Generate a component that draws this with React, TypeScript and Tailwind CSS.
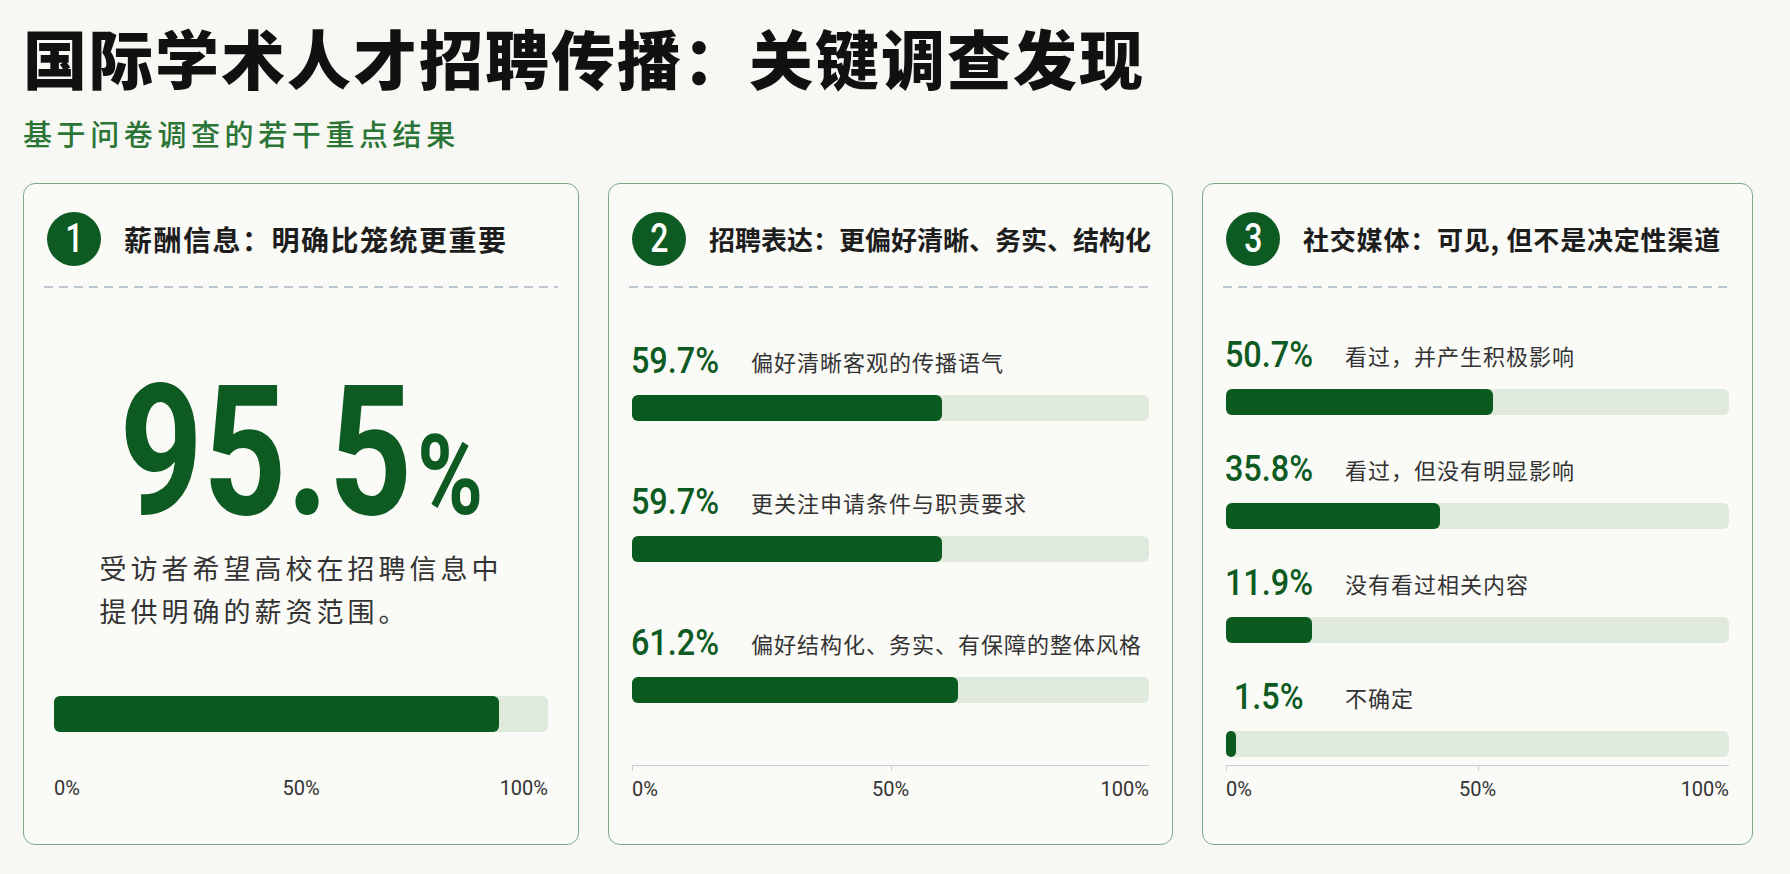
import React from 'react';

const GREEN = 'bg-[#0b5a20]';
const cjk = 'font-[family-name:"Noto_Sans_CJK_SC",sans-serif]';
const num = 'font-[family-name:Roboto,"Liberation_Sans",sans-serif]';

type Row = { pct: string; label: string; fill: number };

const section2: Row[] = [
  { pct: '59.7%', label: '偏好清晰客观的传播语气', fill: 60 },
  { pct: '59.7%', label: '更关注申请条件与职责要求', fill: 60 },
  { pct: '61.2%', label: '偏好结构化、务实、有保障的整体风格', fill: 63 },
];

const section3: Row[] = [
  { pct: '50.7%', label: '看过，并产生积极影响', fill: 53 },
  { pct: '35.8%', label: '看过，但没有明显影响', fill: 42.5 },
  { pct: '11.9%', label: '没有看过相关内容', fill: 17 },
  { pct: '1.5%', label: '不确定', fill: 2 },
];

const CardHeader = ({ n, title, size }: { n: number; title: string; size: string }) => (
  <>
    <div className="flex items-center gap-[23px] pl-[3px] pt-[28px]">
      <div className="flex h-[54px] w-[54px] shrink-0 items-center justify-center rounded-full bg-[#0d5a22]">
        <span className={`${num} inline-block scale-x-[0.8] text-[40px] font-medium leading-none text-white`}>{n}</span>
      </div>
      <h2 className={`${cjk} ${size} whitespace-nowrap font-bold leading-none text-[#1d1d1d]`}>{title}</h2>
    </div>
    <div className="mt-[20px] h-[2px] bg-[repeating-linear-gradient(90deg,#bcc6d1_0_9px,transparent_9px_15px)]" />
  </>
);

const Bar = ({ fill, h }: { fill: number; h: string }) => (
  <div className={`${h} w-full rounded-[6px] bg-[#dfe9dc]`}>
    <div className={`h-full rounded-[6px] ${GREEN}`} style={{ width: `${fill}%` }} />
  </div>
);

const StatRow = ({ row, gap }: { row: Row; gap: string }) => (
  <div className={gap}>
    <div className="flex h-[40px] items-center">
      <div className="flex w-[86px] shrink-0 justify-center">
        <span className={`${num} inline-block scale-x-[0.9] whitespace-nowrap text-[36px] font-medium leading-none text-[#0d5a22]`}>
          {row.pct}
        </span>
      </div>
      <span className={`${cjk} ml-[33px] whitespace-nowrap text-[22px] leading-none tracking-[1px] text-[#333]`}>
        {row.label}
      </span>
    </div>
    <div className="mt-[14px]">
      <Bar fill={row.fill} h="h-[26px]" />
    </div>
  </div>
);

const AxisLabels = ({ mt }: { mt: string }) => (
  <div className={`${num} ${mt} grid grid-cols-3 text-[20px] leading-[24px] text-[#333]`}>
    <span className="text-left">0%</span>
    <span className="text-center">50%</span>
    <span className="text-right">100%</span>
  </div>
);

const Axis = () => (
  <div className="mt-auto mb-[43px] px-[3px]">
    <div className="relative h-px bg-[#c7ccd8]">
      <div className="absolute left-0 top-0 h-[6px] w-px bg-[#c7ccd8]" />
      <div className="absolute left-1/2 top-0 h-[6px] w-px bg-[#c7ccd8]" />
    </div>
    <AxisLabels mt="mt-[11px]" />
  </div>
);

export default function App() {
  return (
    <div className="min-h-screen w-full bg-[#f7f7f3] px-[23px] pt-[24px]">
      <h1 className={`${cjk} text-[64px] font-black leading-none tracking-[2px] text-[#111]`}>
        国际学术人才招聘传播：关键调查发现
      </h1>
      <p className={`${cjk} mt-[31px] text-[29px] font-medium leading-none tracking-[4.6px] text-[#2a7536]`}>
        基于问卷调查的若干重点结果
      </p>

      <div className="mt-[35px] grid grid-cols-[556px_565px_551px] gap-[29px]">
        {/* 1 */}
        <div className="flex h-[662px] flex-col rounded-[12px] border border-[#7aa985] bg-[#fafaf7] px-[20px]">
          <CardHeader n={1} title="薪酬信息：明确比笼统更重要" size="text-[28px] tracking-[1.5px]" />
          <div className={`${num} mt-[86px] flex justify-center font-bold leading-[0.86] text-[#0d5a22]`}>
            <div className="flex origin-center scale-x-[0.8] items-baseline">
              <span className="inline-block text-[182px]">95.5</span>
              <span className="ml-[6px] inline-block text-[112px]">%</span>
            </div>
          </div>
          <div className="mx-auto mt-[15px] w-fit">
            <p className={`${cjk} text-[27px] leading-[43px] tracking-[4px] text-[#333]`}>
              受访者希望高校在招聘信息中
              <br />
              提供明确的薪资范围。
            </p>
          </div>
          <div className="mx-[10px] mt-[64px]">
            <Bar fill={90} h="h-[36px]" />
            <AxisLabels mt="mt-[44px]" />
          </div>
        </div>

        {/* 2 */}
        <div className="flex h-[662px] flex-col rounded-[12px] border border-[#7aa985] bg-[#fafaf7] px-[20px]">
          <CardHeader n={2} title="招聘表达：更偏好清晰、务实、结构化" size="text-[26px]" />
          <div className="mt-[53px] flex flex-col px-[3px]">
            {section2.map((r, i) => (
              <StatRow key={i} row={r} gap={i === 0 ? '' : 'mt-[61px]'} />
            ))}
          </div>
          <Axis />
        </div>

        {/* 3 */}
        <div className="flex h-[662px] flex-col rounded-[12px] border border-[#7aa985] bg-[#fafaf7] px-[20px]">
          <CardHeader n={3} title="社交媒体：可见, 但不是决定性渠道" size="text-[26px] tracking-[0.8px]" />
          <div className="mt-[47px] flex flex-col px-[3px]">
            {section3.map((r, i) => (
              <StatRow key={i} row={r} gap={i === 0 ? '' : 'mt-[34px]'} />
            ))}
          </div>
          <Axis />
        </div>
      </div>
    </div>
  );
}
